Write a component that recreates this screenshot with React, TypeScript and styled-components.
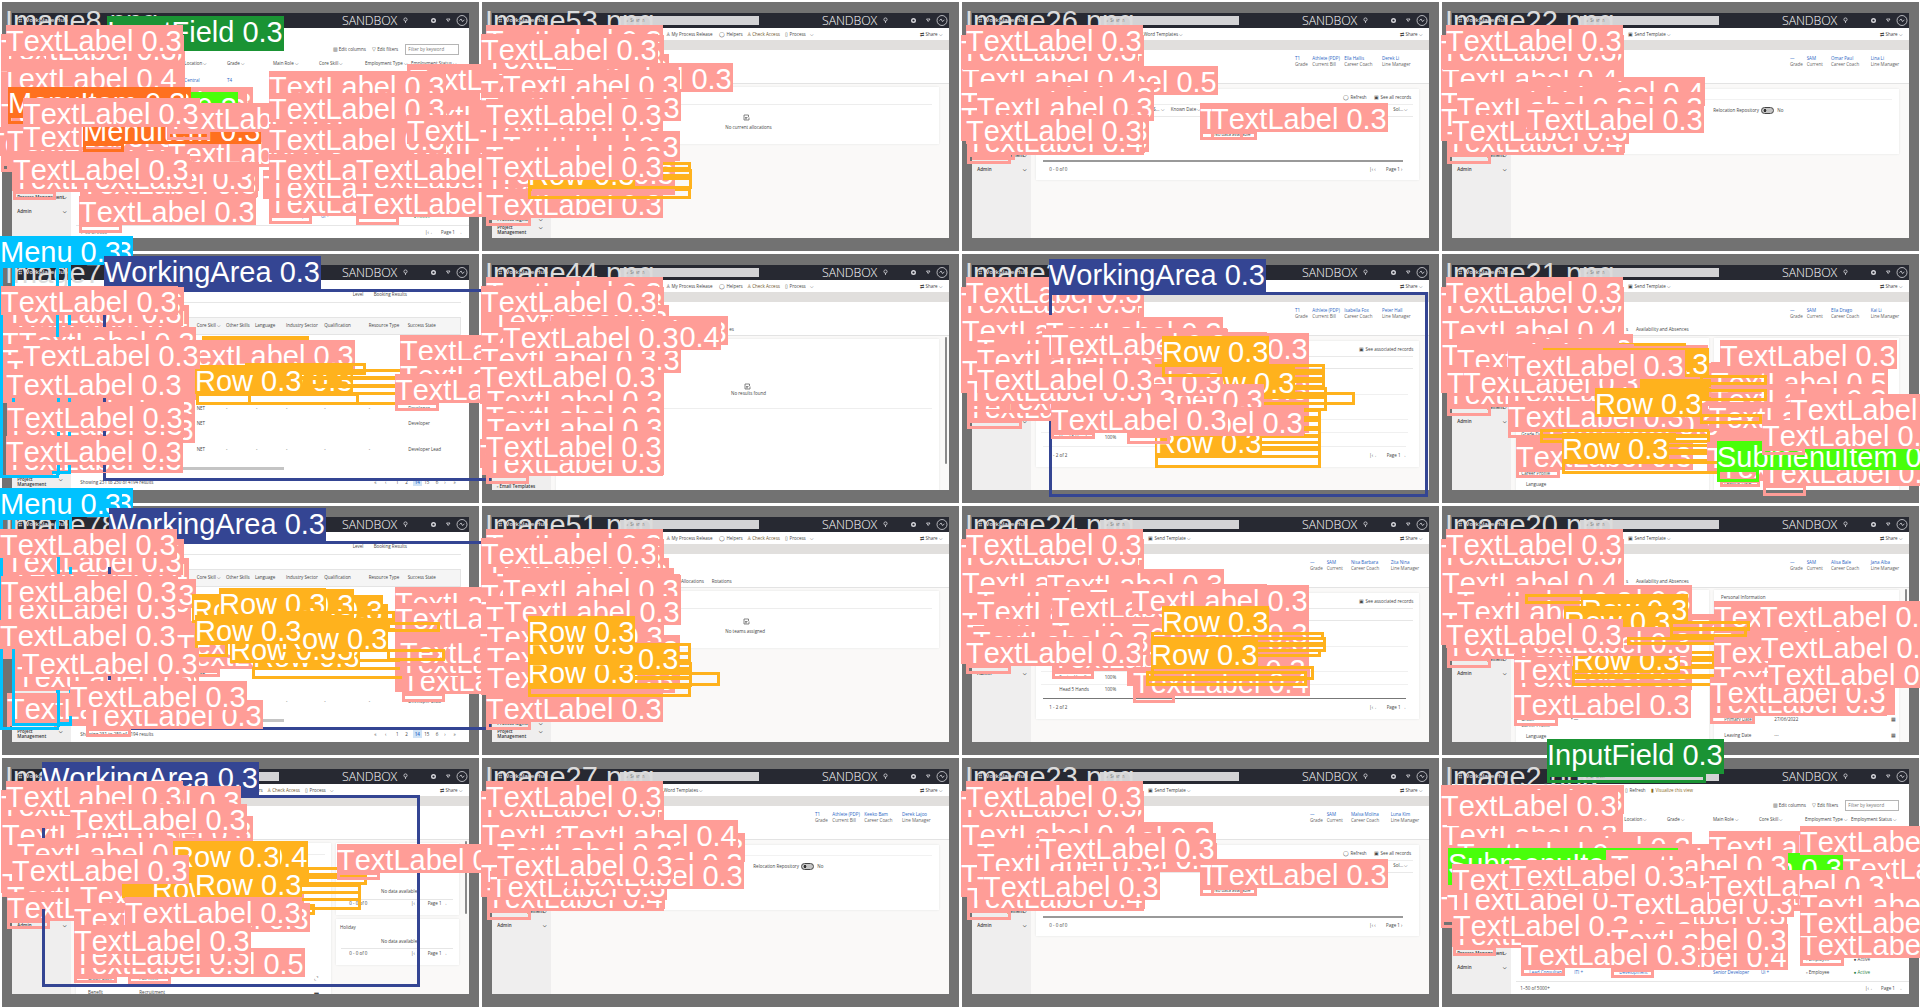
import React from 'react';
import styled, { createGlobalStyle } from 'styled-components';

/* Coordinates inside a tile use a 1440 x 756 space, three units per pixel. */
const px = (n: number) => `${Math.round(n / 3)}px`;
const u = (n: number) => `${n / 3}px`;

const Global = createGlobalStyle`
  html, body { margin: 0; padding: 0; background: #fff; }
  body { overflow: hidden; }
  * { box-sizing: border-box; }
`;

const Sheet = styled.main`
  width: 1920px;
  height: 1008px;
  overflow: hidden;
  background: #fff;
  display: grid;
  grid-template-columns: repeat(4, 480px);
  grid-template-rows: repeat(4, 252px);
  font-family: "Liberation Sans", Arial, sans-serif;
`;

const Tile = styled.section`
  position: relative;
  padding: 2px 1px 1px 2px;
`;

const Mat = styled.div`
  height: 249px;
  padding: 11px 10px 11px 10px;
  background: #727272;
`;

const Screen = styled.div`
  width: 457px;
  height: 225px;
  background: #fff;
  display: flex;
  flex-direction: column;
  overflow: hidden;
  font-family: "Open Sans", "Noto Sans", sans-serif;
  font-size: 4.5px;
  line-height: 5px;
  color: #444;
`;

const Header = styled.header`
  flex: none;
  height: 15px;
  background: #272932;
  display: flex;
  align-items: center;
  color: #e4e4e8;
`;

const AppName = styled.span`
  width: 128px;
  padding-left: 6px;
  font-size: 6px;
  font-weight: 600;
`;

const Search = styled.div`
  width: 139px;
  height: 9px;
  padding-left: 6px;
  background: #d3d3d5;
  color: #777;
  line-height: 9px;
`;

const Env = styled.span`
  width: 60px;
  margin-left: 63px;
  font-weight: 300;
  font-size: 12.4px;
  letter-spacing: -0.1px;
  line-height: 15px;
  color: #fff;
`;

const HeaderIcons = styled.svg`
  width: 66px;
  height: 15px;
  fill: none;
  stroke: #d7d7dc;
  stroke-width: 0.8;
`;

const Toolbar = styled.div`
  flex: none;
  height: 12px;
  display: flex;
  align-items: center;
  background: #fff;
`;

const Split = styled.div`
  flex: 1;
  min-height: 0;
  display: flex;
`;

const Side = styled.nav`
  flex: none;
  width: 59px;
  background: #efeeee;
  font-weight: 600;
  color: #333;
`;

const Main = styled.div<{ $bg?: string }>`
  flex: 1;
  min-width: 0;
  overflow: hidden;
  background: ${(p) => p.$bg || '#faf9f8'};
`;

const Band = styled.div`
  height: 10px;
  background: #e1dfdd;
`;

const Heading = styled.div`
  display: flow-root;
  height: 34px;
  background: #fff;
  border-bottom: 1px solid #e3e3e3;
`;

const Card = styled.div<{ $h: number; $w?: number; $mt?: number }>`
  flex: none;
  width: ${(p) => u(p.$w || 1150)};
  height: ${(p) => u(p.$h)};
  margin: ${(p) => u(p.$mt ?? 14)} 0 0 5px;
  background: #fff;
  box-shadow: 0 0 2px #e4e4e4;
  overflow: hidden;
`;

const Thumb = styled.div<{ $h: number; $gap: number }>`
  flex: none;
  width: 2px;
  height: ${(p) => u(p.$h)};
  margin: 1px 0 0 ${(p) => p.$gap}px;
  border-radius: 1px;
  background: #8a8a8a;
`;

const LineRow = styled.div<{ $cols: string; $mt: number }>`
  display: grid;
  grid-template-columns: ${(p) => p.$cols};
  margin-top: ${(p) => u(p.$mt)};
  height: 5px;
  white-space: nowrap;
`;

const Word = styled.span<{ $c?: string }>`
  color: ${(p) => p.$c || 'inherit'};
`;

const Rule = styled.div<{ $mt: number; $x: number; $w: number; $c?: string; $t?: number }>`
  margin: ${(p) => u(p.$mt)} 0 0 ${(p) => u(p.$x)};
  width: ${(p) => u(p.$w)};
  height: ${(p) => p.$t || 1}px;
  background: ${(p) => p.$c || '#e6e6e6'};
`;

const GridHead = styled.div`
  display: flow-root;
  width: 383px;
  height: 18px;
  margin: 14px 0 71px 7px;
  border: 1px solid #e4e4e4;
  background: #f5f5f5;
`;

const Columns = styled.div`
  display: flex;
`;

const Keyword = styled.span`
  display: block;
  width: 54px;
  height: 11px;
  margin: -3px 0 0 -3px;
  padding-left: 2px;
  border: 1px solid #b5b5b5;
  line-height: 9px;
  color: #777;
`;

const Current = styled.b`
  padding: 1px 2px;
  background: #cfe3f7;
  font-weight: 600;
`;

const Toggle = styled.i`
  display: block;
  width: 13px;
  height: 7px;
  margin-top: -1px;
  border: 1px solid #444;
  border-radius: 4px;
  background: radial-gradient(circle at 3px 2.5px, #333 1.3px, #c4c4c4 1.6px);
`;

const Layer = styled.div`
  position: absolute;
  z-index: 1;
  left: 0;
  top: 0;
  font-size: 29px;
  line-height: 33px;
  font-kerning: none;
  white-space: pre;
  color: #fff;
`;

const FileName = styled.div`
  position: absolute;
  left: 5px;
  top: 5px;
  color: #dcdcdc;
`;

const Frame = styled.div<{ $x: number; $y: number; $w: number; $h: number; $c: string }>`
  position: absolute;
  left: ${(p) => px(p.$x)};
  top: ${(p) => px(p.$y)};
  width: ${(p) => px(p.$w)};
  height: ${(p) => px(p.$h)};
  border: 3px solid ${(p) => p.$c};
`;

const Patch = styled(Frame)`
  border: none;
  background: ${(p) => p.$c};
`;

const Tag = styled.div<{ $x: number; $y: number; $c: string; $tall: boolean }>`
  position: absolute;
  left: ${(p) => px(p.$x)};
  top: ${(p) => px(p.$y)};
  height: ${(p) => (p.$tall ? 35 : 28.5)}px;
  padding-right: 1px;
  background: ${(p) => p.$c};
`;

type Item = [number, React.ReactNode, string?];
type Line = [number, Item[]] | [number, 'rule', number, number, string?, number?];
type Rect = [number, number, number, number];

const blue = '#2b66c4';

/* Stacks text lines and rules; each entry starts with its centre y. */
function Stack({ top, lines }: { top: number; lines: Line[] }) {
  let end = top;
  return (
    <>
      {lines.map((l, i) => {
        if (l[1] === 'rule') {
          const t = l[5] || 1;
          const mt = l[0] - end;
          end = l[0] + t * 3;
          return <Rule key={i} $mt={mt} $x={l[2]} $w={l[3]} $c={l[4]} $t={t} />;
        }
        const items = l[1] as Item[];
        const mt = l[0] - 8 - end;
        end = l[0] + 7;
        return <Words key={i} mt={mt} items={items} />;
      })}
    </>
  );
}

function Words({ mt, items }: { mt: number; items: Item[] }) {
  const cols = [items[0][0], ...items.map((it, k) => (k + 1 < items.length ? items[k + 1][0] - it[0] : 150))];
  return (
    <LineRow $mt={mt} $cols={cols.map(u).join(' ')}>
      <span />
      {items.map((it, k) => (
        <Word key={k} $c={it[2]}>{it[1]}</Word>
      ))}
    </LineRow>
  );
}

const noteIcon = (
  <svg width="7" height="7" viewBox="0 0 7 7" fill="none" stroke="#555" strokeWidth="0.7">
    <path d="M5.500 3V1h-4.500v5h5M2 3.500h2.500M2 4.800h2M6 6V3.500" />
  </svg>
);

const barProcess: Item[] = [[523, '♙ My Process Release'], [682, '◯ Helpers'], [765, '♙ Check Access', '#6b5327'], [880, '▯  Process'], [955, '⌵'], [1285, '⇄ Share ⌵']];
const barTemplates: Item[] = [[515, 'Word Templates   ⌵'], [1285, '⇄ Share ⌵']];
const barEmail: Item[] = [[529, '▣ Send Template  ⌵'], [1285, '⇄ Share ⌵']];

const facts = (x: number, a: string[], b: string[], offs: number[]): Line[] => [
  [177, a.map((s, i) => [x + offs[i], s, blue] as Item)],
  [194, b.map((s, i) => [x + offs[i], s, '#666'] as Item)],
];
const pdp = (n: string, m: string) => facts(792, ['T1', 'Athlete (PDP)', n, m], ['Grade', 'Current Bill', 'Career Coach', 'Line Manager'], [0, 52, 148, 261]);
const sam = (n: string, m: string) => facts(837, ['—', 'SAM', n, m], ['Grade', 'Current', 'Career Coach', 'Line Manager'], [0, 50, 123, 242]);

const admin508: Line[] = [[466, [[16, 'Process Management'], [152, '⌵']]], [508, [[16, 'Admin'], [152, '⌵']]]];
const admin635: Line[] = [[594, [[16, 'Process Management'], [152, '⌵']]], [635, [[16, 'Admin'], [152, '⌵']]]];
const projects: Line[] = [[660, [[16, 'Process Mgmt'], [140, '⌵']]], [684, [[16, 'Project'], [140, '⌵']]], [699, [[16, 'Management']]]];
const templates: Line[] = [[675, [[14, '▫  Emails']]], [703, [[14, '▫  Email Templates']]]];

const colHeads: Item[] = [[340, 'Location ⌵'], [468, 'Grade ⌵'], [606, 'Main Role ⌵'], [744, 'Core Skill ⌵'], [882, 'Employment Type ⌵'], [1020, 'Employment Status ⌵']];
const gridHeads: Item[] = [[353, 'Core Skill   ⌵'], [441, 'Other Skills'], [528, 'Language'], [621, 'Industry Sector'], [736, 'Qualification'], [869, 'Resource Type'], [986, 'Success State']];
const gridRow = (s: string, t: string): Item[] => [[377, t], [465, '-'], [555, '-'], [645, '-'], [760, '-'], [893, '-'], [1012, s]];

type Kind = 'list' | 'grid' | 'note' | 'records' | 'toggle' | 'profile' | 'form' | 'dash';

interface Spec {
  name: string;
  kind: Kind;
  bar?: Item[];
  side: Line[];
  facts?: Line[];
  text?: string;
  tabs?: Item[];
  base: Rect[];
  marks: [string, number, number, number?, number?][];
}

function Body({ s }: { s: Spec }) {
  if (s.kind === 'list')
    return (
      <Main $bg="#fff">
        <Stack
          top={120}
          lines={[
            [148, [[785, '▥ Edit columns'], [903, '▽ Edit filters'], [1012, <Keyword key="k">Filter by keyword</Keyword>]]],
            [191, colHeads],
            [243, [[340, 'Central', blue], [468, 'T4', blue]]],
            [612, [[885, '▫  Employee'], [1028, '●  Active']]],
            [649, [[55, 'Lead Consultant', blue], [190, 'ITI +', blue], [325, 'Development', blue], [606, 'Senior Developer', blue], [750, 'Ui +', blue], [885, '▫  Employee'], [1028, '●  Active', '#2a7f45']]],
            [676, 'rule', 16, 1180],
            [697, [[28, '1–50 of 5000+'], [1062, '|‹   ←'], [1110, 'Page 1'], [1160, '→']]],
          ]}
        />
      </Main>
    );
  if (s.kind === 'grid')
    return (
      <Main $bg="#fff">
        <Stack top={120} lines={[[128, [[845, 'Level'], [908, 'Booking Results']]], [150, 'rule', 20, 1150]]} />
        <GridHead>
          <Stack top={198} lines={[[221, gridHeads]]} />
        </GridHead>
        <Stack
          top={462}
          lines={[
            [470, gridRow('Developer', 'NET')],
            [514, [[377, 'NET'], [1012, 'Developer']]],
            [593, gridRow('Developer Lead', 'NET')],
            [646, 'rule', 20, 620, '#c4c4c4', 3],
            [692, [[28, 'Showing 231 to 250 of 4194 results'], [910, '«'], [942, '‹'], [975, '1'], [1003, '2'], [1025, <Current key="p">14</Current>, blue], [1060, '15'], [1094, '6'], [1120, '›'], [1148, '»']]],
          ]}
        />
      </Main>
    );
  const long = s.text === 'No results found';
  return (
    <Main>
      <Band />
      <Heading>
        <Stack top={151} lines={[...(s.facts || []), ...(s.tabs ? ([[233, s.tabs]] as Line[]) : [])]} />
      </Heading>
      {s.kind === 'note' && (
        <Columns>
          <Card $h={long ? 460 : 170} $mt={10}>
            <Stack
              top={263}
              lines={
                long
                  ? [[402, [[563, noteIcon]]], [425, [[525, s.text]]], [470, 'rule', 16, 1112, '#eee']]
                  : [[314, 'rule', 16, 1112, '#ededed'], [350, [[560, noteIcon]]], [383, [[508, s.text]]]]
              }
            />
          </Card>
          {long && <Thumb $h={382} $gap={6} />}
        </Columns>
      )}
      {s.kind === 'records' && (
        <Card $h={274}>
          <Stack
            top={267}
            lines={[
              [294, [[922, '◯  Refresh'], [1015, '▣  See all records']]],
              [314, 'rule', 16, 1115, '#ededed'],
              [331, [[352, 'S...  ⌵'], [404, 'Known Date ⌵'], [1072, 'Sol... ⌵']]],
              [350, 'rule', 16, 1115, '#e9e9e9'],
              [406, [[535, 'No data available']]],
              [481, 'rule', 20, 1082, '#999', 2],
              [510, [[40, '0 - 0 of 0'], [1000, '|‹   ‹'], [1050, 'Page 1   ›']]],
            ]}
          />
        </Card>
      )}
      {s.kind === 'toggle' && (
        <Card $h={196}>
          <Stack top={267} lines={[[297, 'rule', 16, 1112, '#f2f2f2'], [332, [[592, 'Relocation Repository'], [736, <Toggle key="t" />], [784, 'No']]]]} />
        </Card>
      )}
      {s.kind === 'profile' && (
        <Card $h={378}>
          <Stack
            top={267}
            lines={[
              [294, [[970, '▣  See associated records']]],
              [314, 'rule', 16, 1115, '#e9e9e9'],
              [350, 'rule', 16, 1115, '#e6e6e6'],
              [427, 'rule', 16, 1100, '#f0f0f0'],
              [502, 'rule', 16, 1100, '#f0f0f0'],
              [522, [[70, 'Senior Handler'], [206, '100%']]],
              [540, 'rule', 16, 1100, '#f0f0f0'],
              [559, [[70, 'Head 5 Hands'], [206, '100%']]],
              [583, 'rule', 20, 1090, s.name.startsWith('Image24') ? '#777' : '#eee'],
              [611, [[40, '1 - 2 of 2'], [1000, '|‹   ←'], [1052, 'Page 1   →']]],
            ]}
          />
        </Card>
      )}
      {s.kind === 'form' && (
        <Columns>
          <Card $h={460} $w={580} $mt={6}>
            <Stack top={259} lines={[[548, [[16, 'Grade Date']]], [648, [[16, 'Grade'], [165, '•   —']]], [667, [[16, 'Career Profile']]], [700, [[30, 'Language']]]]} />
          </Card>
          <Card $h={460} $w={555} $mt={6}>
            <Stack top={259} lines={[[282, [[20, 'Personal Information']]], [372, [[20, 'Name'], [495, '◂']]], [648, [[30, 'Primary Date'], [180, '27/06/2022'], [530, '▦']]], [697, [[30, 'Leaving Date'], [180, '---'], [530, '▦']]]]} />
          </Card>
          {s.name.startsWith('Image20') && <Thumb $h={190} $gap={6} />}
        </Columns>
      )}
      {s.kind === 'dash' && (
        <Columns>
          <Card $h={460} $w={765} $mt={10}>
            <Stack top={263} lines={[[295, 'rule', 16, 730, '#eee'], [669, [[36, 'Grade Date'], [190, 'Full Time'], [715, '⌞⌝']]], [710, [[36, 'Benefit'], [190, 'Recruitment'], [715, '▬']]]]} />
          </Card>
          <div>
            <Card $h={216} $w={370} $mt={10}>
              <Stack top={263} lines={[[407, [[135, 'No data available']]], [430, 'rule', 16, 335], [445, [[40, '0 - 0 of 0'], [225, '|‹'], [275, 'Page 1   →']]]]} />
            </Card>
            <Card $h={138} $w={370} $mt={12}>
              <Stack top={491} lines={[[517, [[12, 'Holiday']]], [557, [[135, 'No data available']]], [577, 'rule', 16, 335], [595, [[40, '0 - 0 of 0'], [225, '|‹'], [275, 'Page 1   →']]]]} />
            </Card>
          </div>
          <Thumb $h={220} $gap={6} />
        </Columns>
      )}
    </Main>
  );
}

const classes: Record<string, [string, string, number, boolean]> = {
  T: ['TextLabel', '#FF9D97', 27, false],
  M: ['MenuItem', '#FF701F', 27, false],
  R: ['Row', '#FFB21D', 0, false],
  S: ['SubmenuItem', '#48FF0A', 30, false],
  I: ['InputField', '#1A9334', 27, true],
  N: ['Menu', '#00C2FF', 0, false],
  W: ['WorkingArea', '#344593', 0, true],
};

/* "T4" is a tag with score 0.4; a trailing "b" draws only the frame, "f" a solid patch. */
function MarkView({ m }: { m: Spec['marks'][number] }) {
  const [code, x, y, w, h] = m;
  const [label, color, dh, tall] = classes[code[0]];
  if (code[1] === 'b') return <Frame $x={x} $y={y} $w={w || 0} $h={h || 0} $c={color} />;
  if (code[1] === 'f') return <Patch $x={x} $y={y} $w={w || 0} $h={h || 0} $c={color} />;
  const fh = h ?? dh;
  return (
    <>
      {fh > 0 && w !== 0 && <Frame $x={x} $y={y + (tall ? 105 : 84)} $w={w ?? 130} $h={fh} $c={color} />}
      <Tag $x={x} $y={y} $c={color} $tall={tall}>{`${label} 0.${code[1] || 3}`}</Tag>
    </>
  );
}

const specs: Spec[] = [
  {
    name: 'Image8.png', kind: 'list', side: admin635,
    base: [[4, 102, 545, 390], [22, 104, 533, 160], [35, 463, 740, 110], [550, 262, 209, 50], [550, 310, 257, 180], [808, 213, 632, 340], [1220, 192, 220, 30], [808, 540, 265, 95], [1068, 550, 372, 100], [240, 573, 532, 20]],
    marks: [
      ['I', 322, 48, 0], ['T4', 4, 190], ['T', 22, 104], ['T', 4, 102], ['T', 18, 75],
      ['T', 228, 262, 0], ['T', 210, 278, 0], ['S', 24, 276, 0], ['T', 4, 405], ['T', 22, 425, 0], ['T', 18, 380], ['T', 4, 295], ['M', 40, 261, 0], ['M', 24, 261, 0], ['Mb', 24, 345, 60, 27],
      ['T', -40, 380, 0], ['T', 70, 415, 0], ['T', 22, 375, 0], ['T', 70, 362, 0], ['T', 503, 413, 0], ['M', 248, 345, 122], ['T', 500, 310], ['T', 68, 295, 0],
      ['T', 40, 488], ['T', 243, 505, 0], ['T', 230, 488, 0], ['Tf', 240, 480, 335, 68], ['Tf', 503, 485, 272, 35], ['Mb', 248, 429, 122, 27], ['T', 38, 463, 0],
      ['T', 238, 588],
      ['T', 790, 510, 0], ['T', 1230, 192, 0], ['T', 808, 213, 0], ['T', 1222, 300, 0], ['T', 1222, 395, 0], ['T', 808, 560], ['T', 808, 515, 0], ['T', 808, 463, 0],
      ['T', 808, 372, 0], ['T', 808, 278, 0], ['T', 1222, 345, 0], ['T', 1068, 490, 0], ['T', 1068, 565], ['T', 1068, 463, 0],
    ],
  },
  {
    name: 'Image53.png', kind: 'note', bar: barProcess, side: projects, text: 'No current allocations',
    base: [[4, 102, 545, 350], [6, 450, 543, 200], [550, 162, 17, 30], [549, 190, 54, 172], [549, 393, 51, 90]],
    marks: [
      ['T', 18, 75, 0], ['T', 20, 104, 0], ['T', 36, 162], ['T', 18, 128], ['T', 4, 102, 0],
      ['T', 228, 189, 0], ['T', 4, 225], ['T', 70, 210, 0], ['T', 72, 277, 0], ['T', 4, 275, 0], ['T', 0, 372, 0], ['T', 18, 345, 0], ['T', 18, 298, 0],
      ['T', 70, 393, 0], ['T', 18, 423, 0], ['T', 18, 500], ['T', 54, 475, 0], ['T', 18, 568, 134], ['Rb', 145, 564, 490, 33], ['Rb', 145, 530, 493, 36],
      ['Rb', 145, 508, 493, 25], ['Rb', 145, 486, 490, 24], ['R', 145, 477], ['Tf', 155, 568, 430, 18], ['T', 18, 452, 0],
    ],
  },
  {
    name: 'Image26.png', kind: 'records', bar: barTemplates, side: admin508, facts: pdp('Ella Hallis', 'Derek Li'),
    base: [[4, 104, 550, 318], [22, 420, 533, 40], [550, 262, 32, 100]],
    marks: [
      ['T4', 22, 104], ['T', 4, 104], ['T', 18, 75, 0], ['T5', 243, 198, 0], ['T4', 5, 190, 0], ['Tf', 10, 190, 530, 20], ['T', 50, 247, 0], ['T', 4, 262, 0], ['T', 4, 307, 0],
      ['T', 50, 277, 0], ['T', 36, 370, 130], ['T4', 22, 377, 132, 30], ['T', 36, 345, 0], ['T', 18, 345, 0], ['T', 720, 310, 130], ['T', 752, 310, 138],
    ],
  },
  {
    name: 'Image22.png', kind: 'toggle', bar: barEmail, side: admin508, facts: sam('Omar Paul', 'Lina Li'),
    base: [[4, 104, 550, 318], [22, 420, 533, 40], [550, 232, 242, 165]],
    marks: [
      ['T', 22, 104], ['T', 4, 104], ['T', 18, 75, 0], ['T4', 5, 190, 0], ['Tf', 10, 190, 530, 20], ['T4', 264, 232, 0], ['T', 50, 247, 0], ['T', 260, 277, 0], ['T', 4, 262, 0], ['T', 4, 310, 0],
      ['T', 50, 277, 0], ['T4', 22, 377, 132, 30], ['T', 36, 345, 0], ['T', 260, 313, 0],
    ],
  },
  {
    name: 'Image7.png', kind: 'grid', side: projects,
    base: [[4, 102, 545, 350], [22, 450, 525, 205], [549, 225, 40, 220], [549, 432, 36, 137], [1200, 248, 240, 130]],
    marks: [
      ['N', 32, -47], ['N', 0, -47], ['Nb', 0, 38, 178, 640], ['Nb', 35, 38, 177, 627], ['Wb', 310, 110, 1165, 577], ['W', 313, 13],
      ['T', 22, 104, 0], ['T4', 36, 160, 0], ['T', 18, 135, 0], ['T', 4, 102, 0], ['T', 4, 225, 0], ['T', 57, 225, 0], ['T', 4, 277, 0], ['T', 20, 310, 0],
      ['R', 606, 252], ['Tf', 533, 265, 380, 80], ['T', 535, 265, 0], ['R', 738, 338], ['Rb', 735, 334, 362, 35], ['Rb', 745, 350, 570, 30], ['Rb', 590, 375, 725, 30], ['Rb', 590, 400, 725, 30], ['Rb', 745, 420, 500, 38], ['Rb', 588, 423, 490, 35], ['R', 586, 338],
      ['T', 55, 432, 0], ['T', 55, 485, 0], ['T', 22, 470, 0], ['T', 18, 575, 140, 8],
      ['T', 70, 265, 0], ['T', 18, 352, 0], ['T', 22, 449, 0], ['T', 18, 552, 0],
      ['Nf', 0, 215, 8, 463], ['Nf', 0, 668, 178, 9], ['Nf', 170, 640, 8, 30], ['Nf', 205, 640, 8, 24], ['Nf', 155, 657, 57, 8], ['Nf', 168, 190, 9, 65], ['Nf', 205, 190, 8, 30], ['Nf', 170, 438, 8, 12], ['Nf', 205, 438, 8, 12], ['Nf', 170, 540, 8, 12], ['Nf', 205, 540, 8, 12],
      ['Wf', 310, 190, 8, 35], ['Wf', 310, 438, 8, 12], ['Wf', 310, 538, 8, 14], ['Wf', 310, 638, 8, 20],
      ['T', 1200, 248, 0], ['T', 1200, 325, 0], ['T', 1185, 365, 132],
    ],
  },
  {
    name: 'Image44.png', kind: 'note', bar: barProcess, side: templates, text: 'No results found', tabs: [[535, 'es']],
    base: [[4, 102, 545, 225], [0, 327, 553, 130], [6, 450, 545, 220], [549, 195, 54, 165]],
    marks: [
      ['T', 18, 75, 0], ['T', 20, 104, 0], ['T', 36, 160], ['T', 4, 102, 0], ['T', 212, 193, 0], ['T4', 192, 206, 0], ['T', 4, 225], ['T', 72, 277, 0], ['T', 4, 274, 0], ['T', 70, 210, 0],
      ['T', 20, 398, 0], ['T', 0, 370, 0], ['Tf', 20, 385, 530, 32], ['T', 20, 400, 0], ['T', 0, 327, 0], ['T', 18, 447, 0], ['T', 20, 483, 0], ['T', 0, 560, 0], ['T', 18, 585], ['T', 18, 537, 0],
    ],
  },
  {
    name: 'Image25.png', kind: 'profile', bar: [[1285, '⇄ Share ⌵']], side: admin508, facts: pdp('Isabella Fox', 'Peter Hall'),
    base: [[4, 104, 550, 318], [22, 420, 165, 70], [187, 420, 85, 62], [270, 195, 520, 270], [790, 243, 257, 300], [505, 455, 530, 95]],
    marks: [
      ['T4', 22, 104], ['T', 4, 104], ['T', 18, 75, 0], ['Wb', 267, 121, 1137, 614], ['W', 268, 22], ['T4', 5, 190, 0], ['T', 50, 247, 0], ['T', 258, 195, 0], ['T', 270, 228, 0],
      ['T', 390, 240, 0], ['T', 516, 243, 0], ['T', 5, 310, 0], ['T', 50, 277, 0], ['T', 245, 232, 0], ['T', 272, 232, 0], ['T', 516, 365, 0],
      ['Rb', 586, 335, 509, 25], ['Rb', 586, 360, 509, 25], ['Rb', 586, 385, 509, 25], ['Rb', 600, 405, 500, 30], ['Rb', 600, 432, 500, 44], ['Rb', 800, 421, 385, 38], ['R', 683, 344],
      ['T', 380, 397, 0], ['T', 258, 345, 0], ['Rb', 606, 337, 188, 38], ['R', 606, 252], ['T', 20, 420, 165], ['T', 120, 395, 0], ['T', 22, 370], ['T', 50, 335, 0],
      ['Rb', 586, 470, 497, 30], ['Rb', 586, 500, 497, 30], ['Rb', 586, 528, 497, 28], ['Rb', 586, 548, 497, 28], ['Rb', 586, 568, 497, 25], ['Rb', 586, 587, 497, 30], ['Rb', 586, 610, 497, 38],
      ['R', 586, 525], ['T', 500, 465, 130, 28], ['T', 272, 455, 133, 22],
    ],
  },
  {
    name: 'Image21.png', kind: 'form', bar: barEmail, side: admin508, facts: sam('Ella Drago', 'Kai Li'), tabs: [[345, 's'], [375, 'Availability and Absences']],
    base: [[4, 104, 550, 318], [22, 420, 500, 40], [205, 448, 600, 90], [228, 550, 140, 100], [205, 280, 600, 180], [808, 332, 530, 330], [970, 427, 470, 250]],
    marks: [
      ['T', 22, 104], ['T', 4, 104], ['T', 18, 75, 0], ['T4', 5, 190, 0], ['T', 48, 247, 0], ['Rb', 250, 273, 490, 30], ['T', 222, 282, 0], ['T', 5, 262, 0], ['T', 22, 377, 132, 30], ['T', 50, 277, 0], ['T', 280, 375, 0], ['Rb', 310, 288, 490, 25], ['R', 485, 288],
      ['T', 205, 295, 0], ['T', 205, 372, 0], ['T', 22, 345, 0], ['Rf', 600, 380, 380, 65], ['Tf', 808, 390, 165, 45], ['Rb', 780, 395, 200, 22], ['T', 70, 345, 0], ['Tf', 205, 340, 400, 15], ['T', 205, 295, 0], ['Rf', 740, 300, 8, 60], ['T', 70, 345, 0], ['T', 205, 295, 0],
      ['T', 310, 470, 0], ['T', 205, 448, 150], ['T', 228, 568, 132], ['Rb', 300, 530, 510, 25], ['Rb', 300, 550, 510, 25], ['Rb', 365, 575, 445, 25], ['Rb', 365, 600, 445, 30],
      ['T', 812, 330, 0], ['T5', 812, 345, 0], ['T', 812, 395, 0], ['T', 800, 570, 0], ['T', 808, 450, 0], ['Rb', 780, 370, 200, 30], ['Rb', 780, 410, 200, 35], ['Rb', 780, 487, 185, 30],
      ['R', 465, 407], ['Rf', 383, 543, 325, 30], ['R', 365, 543], ['Rb', 365, 628, 495, 38], ['T', 840, 265, 0], ['T', 840, 600, 120, 20], ['T', 970, 615, 130, 32], ['S', 832, 567, 127, 38], ['T', 1050, 427, 0], ['T', 965, 505, 130, 20],
    ],
  },
  {
    name: 'Image78.png', kind: 'grid', side: projects,
    base: [[4, 75, 545, 390], [42, 450, 530, 110], [20, 570, 240, 95], [549, 225, 24, 225], [530, 350, 130, 155], [1185, 248, 255, 315]],
    marks: [
      ['N', 32, -47], ['N', 0, -47], ['Nb', 0, 38, 178, 640], ['Nb', 35, 40, 180, 625], ['Wb', 325, 110, 1150, 568], ['W', 327, 13],
      ['T', 22, 104, 0], ['T4', 36, 162, 0], ['T', 18, 125, 0], ['T', 0, 75, 0], ['T', 42, 245, 0], ['T', 57, 225, 0], ['T', 4, 268, 0], ['T', 4, 215, 0],
      ['Rf', 586, 300, 580, 130], ['R', 575, 270], ['R', 828, 272], ['R', 740, 255], ['R', 657, 253], ['T', 530, 408, 130], ['T', 530, 375, 0],
      ['Rb', 860, 322, 325, 30], ['Rb', 860, 350, 460, 30], ['Rb', 690, 435, 645, 40], ['R', 760, 412], ['R', 740, 390], ['R', 690, 390], ['Rb', 757, 490, 498, 37], ['R', 842, 356], ['R', 586, 333], ['Rb', 586, 415, 100, 45],
      ['T', 4, 268, 0], ['T', 4, 215, 0], ['T', 0, 348, 0], ['T', 65, 470, 0], ['T', 65, 433, 0], ['T', 22, 568, 150], ['Nf', 0, 455, 8, 223], ['Nf', 0, 668, 178, 9], ['Nf', 35, 440, 8, 225], ['Nf', 35, 658, 180, 8], ['Nf', 170, 520, 8, 150], ['Nf', 207, 635, 8, 30],
      ['T', 50, 470, 0], ['T', 65, 433, 0], ['T', 257, 588, 136], ['T', 210, 530, 0], ['T', 1185, 248, 0], ['T', 1205, 483, 128], ['T', 1200, 430, 0], ['T', 1185, 298, 0], ['T', 1200, 400, 0], ['Rb', 1160, 355, 160, 30], ['Rb', 1160, 435, 175, 35],
      ['Wf', 325, 190, 8, 22], ['Wf', 325, 516, 8, 12], ['Nf', 170, 160, 8, 52], ['Nf', 207, 190, 8, 20],
    ],
  },
  {
    name: 'Image51.png', kind: 'note', bar: barProcess, side: projects, text: 'No teams assigned', tabs: [[390, 'Allocations'], [482, 'Rotations']],
    base: [[4, 102, 547, 470], [0, 372, 550, 90], [549, 192, 33, 50], [549, 212, 54, 150], [549, 393, 51, 160]],
    marks: [
      ['T', 18, 75, 0], ['T', 20, 104, 0], ['T', 36, 162], ['T', 18, 128], ['T', 4, 102, 0], ['T', 50, 192, 0], ['T', 4, 225], ['T', 70, 210, 0], ['T', 4, 277, 0], ['T', 18, 290, 0],
      ['T', 0, 372, 0], ['T', 70, 393, 0], ['T', 22, 350, 0], ['T', 72, 277, 0], ['T', 22, 415, 0], ['T', 54, 480, 0], ['T', 22, 475, 0], ['Rb', 145, 418, 488, 60], ['Rb', 145, 445, 490, 30], ['Rb', 145, 475, 493, 25], ['Rb', 145, 505, 577, 41], ['R', 276, 418],
      ['Rb', 145, 495, 493, 30], ['Rb', 145, 520, 493, 30], ['T', 18, 568, 134], ['Rb', 145, 545, 490, 34], ['R', 145, 460], ['Rf', 145, 415, 320, 70], ['R', 145, 373], ['R', 145, 337],
    ],
  },
  {
    name: 'Image24.png', kind: 'profile', bar: barEmail, side: admin508, facts: sam('Nisa Barbara', 'Zita Nina'),
    base: [[4, 104, 550, 375], [262, 195, 530, 270], [516, 243, 532, 300], [275, 400, 250, 95], [500, 480, 30, 65]],
    marks: [
      ['T4', 22, 104], ['T', 4, 104], ['T', 18, 75, 0], ['T4', 5, 190, 0], ['T', 262, 195, 0], ['T', 50, 247, 0], ['T', 390, 240, 0], ['T', 5, 310, 0], ['T', 50, 277, 0], ['T', 275, 265, 0], ['T', 516, 243, 0],
      ['T', 275, 400, 127], ['T', 516, 365, 0], ['T', 510, 450, 0], ['T', 20, 345, 0], ['T', 275, 415, 127], ['T', 275, 340, 0], ['T', 516, 343, 0], ['T', 40, 365, 0], ['T', 18, 398, 134], ['T4', 520, 488, 125, 24],
      ['Rb', 573, 384, 520, 25], ['Rb', 573, 400, 525, 25], ['Rb', 573, 420, 525, 25], ['Rb', 573, 435, 510, 25], ['Rb', 573, 486, 488, 42], ['Rb', 557, 500, 483, 24], ['Rb', 557, 522, 483, 25], ['R', 606, 305], ['R', 573, 405],
    ],
  },
  {
    name: 'Image20.png', kind: 'form', bar: barEmail, side: admin508, facts: sam('Alisa Bale', 'Jana Alba'), tabs: [[345, 's'], [375, 'Availability and Absences']],
    base: [[4, 104, 550, 318], [22, 420, 500, 40], [225, 243, 530, 230], [222, 455, 530, 185], [823, 290, 617, 250], [757, 330, 70, 60], [810, 520, 630, 30], [810, 545, 555, 88]],
    marks: [
      ['T', 22, 104], ['T', 4, 104], ['T', 18, 75, 0], ['T4', 5, 190, 0], ['T', 225, 243, 0], ['T', 50, 247, 0], ['T', 5, 310, 0], ['T', 50, 277, 0], ['Rb', 255, 270, 490, 30], ['R', 422, 270], ['R', 373, 305], ['T', 225, 470, 0],
      ['T', 22, 377, 132, 30], ['Rb', 395, 440, 430, 25], ['Rb', 395, 465, 430, 25], ['T', 222, 450, 0], ['Rb', 395, 487, 510, 32], ['Rb', 395, 515, 430, 30], ['T', 225, 380, 0], ['R', 398, 420], ['Rf', 398, 440, 320, 14], ['Tf', 398, 420, 340, 35], ['T', 225, 370, 0], ['T', 18, 345, 0], ['T', 222, 555, 133],
      ['T', 757, 330, 0], ['T', 823, 290, 0], ['T', 823, 370, 0], ['Rb', 690, 350, 240, 30], ['Rb', 690, 368, 230, 30], ['Rb', 560, 400, 290, 25], ['T', 823, 470, 0], ['T', 823, 400, 0], ['T', 960, 290, 0], ['T', 810, 550, 135], ['T', 810, 520, 0], ['T', 985, 465, 0], ['T', 962, 383, 0],
    ],
  },
  {
    name: 'Image5.png', kind: 'dash', bar: barProcess, side: admin508,
    base: [[4, 102, 545, 310], [20, 410, 200, 55], [228, 100, 490, 50], [228, 144, 513, 116], [222, 410, 690, 100], [222, 505, 530, 140]],
    marks: [
      ['Wb', 127, 118, 1135, 577], ['W', 127, 17], ['T4', 5, 190], ['T', 22, 125, 0], ['T', 4, 102], ['T', 192, 90, 0], ['T', 18, 75, 0], ['T', 228, 180, 0], ['T', 5, 190, 0], ['T', 210, 144, 0], ['T', 228, 245, 0], ['T', 50, 247, 0],
      ['Rb', 845, 333, 255, 35], ['Rb', 845, 350, 255, 37], ['Rf', 455, 335, 470, 50], ['R4', 603, 255], ['R', 520, 255], ['T', 5, 335, 0], ['T', 36, 335, 0], ['T', 20, 375, 0], ['T', 20, 407, 130, 28],
      ['Rb', 586, 385, 497, 30], ['Rb', 586, 405, 497, 30], ['Rb', 586, 425, 497, 35], ['Rb', 455, 445, 490, 32], ['R', 365, 345], ['T', 240, 355, 0], ['T', 240, 375, 0], ['Rf', 365, 375, 250, 50], ['R', 455, 350], ['R', 586, 339], ['T', 222, 440, 0], ['T', 398, 440, 0], ['T', 375, 423, 0], ['T', 36, 297, 0],
      ['T5', 384, 575, 129, 24], ['T', 222, 577, 130, 22], ['T', 222, 550, 0], ['T', 222, 507, 0], ['T', 1012, 265, 130, 24], ['Wf', 127, 215, 8, 30], ['Wf', 127, 460, 8, 235],
    ],
  },
  {
    name: 'Image27.png', kind: 'toggle', bar: barTemplates, side: admin508, facts: pdp('Keeko Bam', 'Derek Lajoo'),
    base: [[4, 104, 550, 318], [22, 420, 533, 40], [550, 232, 236, 165]],
    marks: [
      ['T4', 22, 104], ['T', 4, 104], ['T', 18, 75, 0], ['T4', 5, 190, 0], ['T', 264, 232, 0], ['T4', 243, 193, 0], ['T', 260, 277, 0], ['T', 50, 247, 0], ['T', 4, 310, 0], ['T4', 22, 377, 132, 30], ['T', 30, 345, 0], ['T', 260, 313, 0], ['T', 50, 282, 0],
    ],
  },
  {
    name: 'Image23.png', kind: 'records', bar: barEmail, side: admin508, facts: sam('Malva Molina', 'Luna Kim'),
    base: [[4, 104, 550, 318], [22, 420, 533, 40], [225, 198, 533, 148]],
    marks: [
      ['T', 22, 104], ['T', 4, 104], ['T', 18, 75, 0], ['T', 225, 198, 0], ['T4', 5, 190, 0], ['T', 50, 247, 0], ['T', 240, 262, 0], ['T', 4, 310, 0], ['T', 50, 277, 0], ['T', 238, 232, 0], ['T4', 22, 377, 132, 30], ['T', 50, 345, 0], ['T', 68, 345, 0], ['T', 720, 310, 130], ['T', 752, 310, 138],
    ],
  },
  {
    name: 'Image2.png', kind: 'list', side: admin635, bar: [[520, '▯ Refresh'], [598, '▮ Visualize this view', '#8a6a1e']],
    base: [[4, 87, 547, 403], [35, 463, 735, 110], [225, 228, 530, 250], [510, 283, 530, 350], [808, 225, 632, 240], [1080, 210, 360, 395]],
    marks: [
      ['Ib', 322, 54, 476, 28], ['I', 322, -51, 0], ['T', 20, 87, 0], ['T', 4, 102, 0], ['T', 5, 190, 0], ['Tf', 20, 190, 500, 20], ['T', 225, 228, 0], ['T', 50, 247, 0], ['Sf', 490, 276, 222, 7], ['T', 228, 283, 0], ['T', 4, 405], ['T', 500, 265, 0], ['Sf', 24, 276, 60, 110], ['S', 24, 276, 0], ['Tf', 498, 283, 250, 35],
      ['T', 68, 370, 0], ['T', 22, 400, 0], ['T', 50, 385, 0], ['T', 36, 325, 0], ['T', 808, 225, 0], ['T', 1080, 290, 0], ['S', 520, 292, 300], ['T', 513, 283, 0], ['T', 510, 345, 0], ['T', 808, 370, 0], ['T', 208, 313, 0],
      ['T', 510, 430, 0], ['T', 530, 395, 0], ['T', 230, 480, 0], ['T', 40, 488], ['T', 38, 463, 0], ['T4', 513, 555], ['T', 513, 505, 0], ['T', 243, 550, 132], ['T', 1210, 292, 0], ['T', 1200, 400, 0],
      ['T', 808, 343, 0], ['T', 1080, 210, 0], ['T', 1080, 400, 0], ['T', 1080, 520, 132, 26], ['T', 1080, 452, 0],
    ],
  },
];

function TileView({ s }: { s: Spec }) {
  return (
    <Tile>
      <Mat>
        <Screen>
          <Header>
            <AppName>⠿ Workplace Hub</AppName>
            <Search>⌕ Search</Search>
            <Env>SANDBOX</Env>
            <HeaderIcons viewBox="0 0 66 15">
              <circle cx="3.5" cy="6.5" r="1.6" />
              <path d="M3.5 8v2M44.500 6h3.500L46.200 8.500z" />
              <circle cx="31.500" cy="7.500" r="1.800" strokeWidth="1.400" />
              <circle cx="60" cy="7.500" r="5" />
              <path d="M57.500 7.500l1.600-1.500 1.300 2.500 2-1.500" />
            </HeaderIcons>
          </Header>
          <Toolbar>{s.bar && <Words mt={0} items={s.bar} />}</Toolbar>
          <Split>
            <Side><Stack top={120} lines={s.side} /></Side>
            <Body s={s} />
          </Split>
        </Screen>
      </Mat>
      <Layer>
        <FileName>{s.name}</FileName>
        {s.base.map(([x, y, w, h], i) => <Patch key={i} $x={x} $y={y} $w={w} $h={h} $c="#FF9D97" />)}
        {s.marks.map((m, i) => <MarkView key={i} m={m} />)}
      </Layer>
    </Tile>
  );
}

export default function App() {
  return (
    <>
      <Global />
      <Sheet>
        {specs.map((s) => <TileView key={s.name} s={s} />)}
      </Sheet>
    </>
  );
}
